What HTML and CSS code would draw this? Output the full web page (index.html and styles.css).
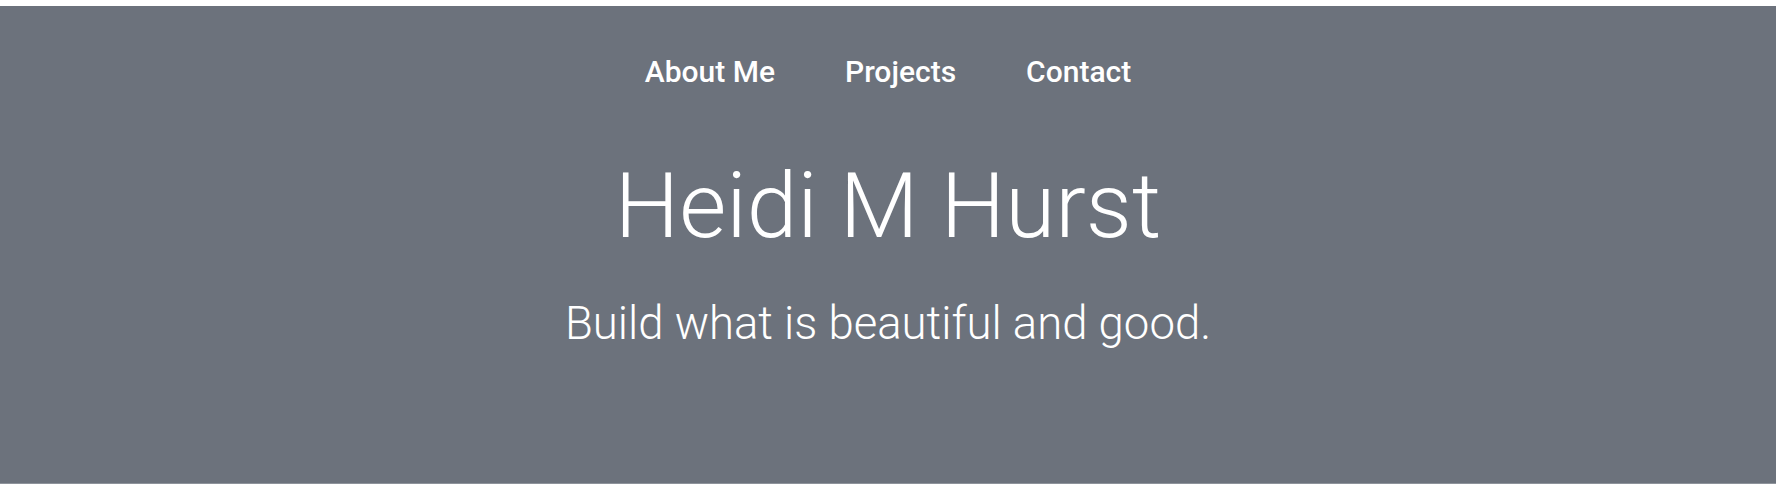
FILE: index.html
```html
<!DOCTYPE html>
<html lang="en">
<head>
<meta charset="utf-8">
<title>Heidi M Hurst</title>
<link rel="stylesheet" href="styles.css">
</head>
<body>
<header class="hero">
  <nav class="nav">
    <a class="nav-link" href="#about">About Me</a>
    <a class="nav-link" href="#projects">Projects</a>
    <a class="nav-link" href="#contact">Contact</a>
  </nav>
  <h1 class="title">Heidi M Hurst</h1>
  <p class="tagline">Build what is beautiful and good.</p>
</header>
</body>
</html>
```
FILE: styles.css
```css
html, body {
  margin: 0;
  padding: 0;
  background: #ffffff;
}
body {
  padding-top: 6px;
  font-family: Roboto, "Liberation Sans", sans-serif;
}
.hero {
  background: #6c727c;
  height: 478px;
  border-bottom: 1px solid #8e939b;
  color: #ffffff;
  display: flex;
  flex-direction: column;
  align-items: center;
  padding-top: 48px;
  box-sizing: border-box;
}
.nav {
  display: flex;
  justify-content: center;
  gap: 70px;
  height: 36px;
}
.nav-link {
  color: #ffffff;
  text-decoration: none;
  font-size: 30px;
  font-weight: 500;
  line-height: 36px;
}
.title {
  margin: 62px 0 0;
  font-size: 91px;
  font-weight: 300;
  line-height: 109px;
}
.tagline {
  margin: 36px 0 0;
  font-size: 45.5px;
  font-weight: 300;
  line-height: 53px;
}
```
